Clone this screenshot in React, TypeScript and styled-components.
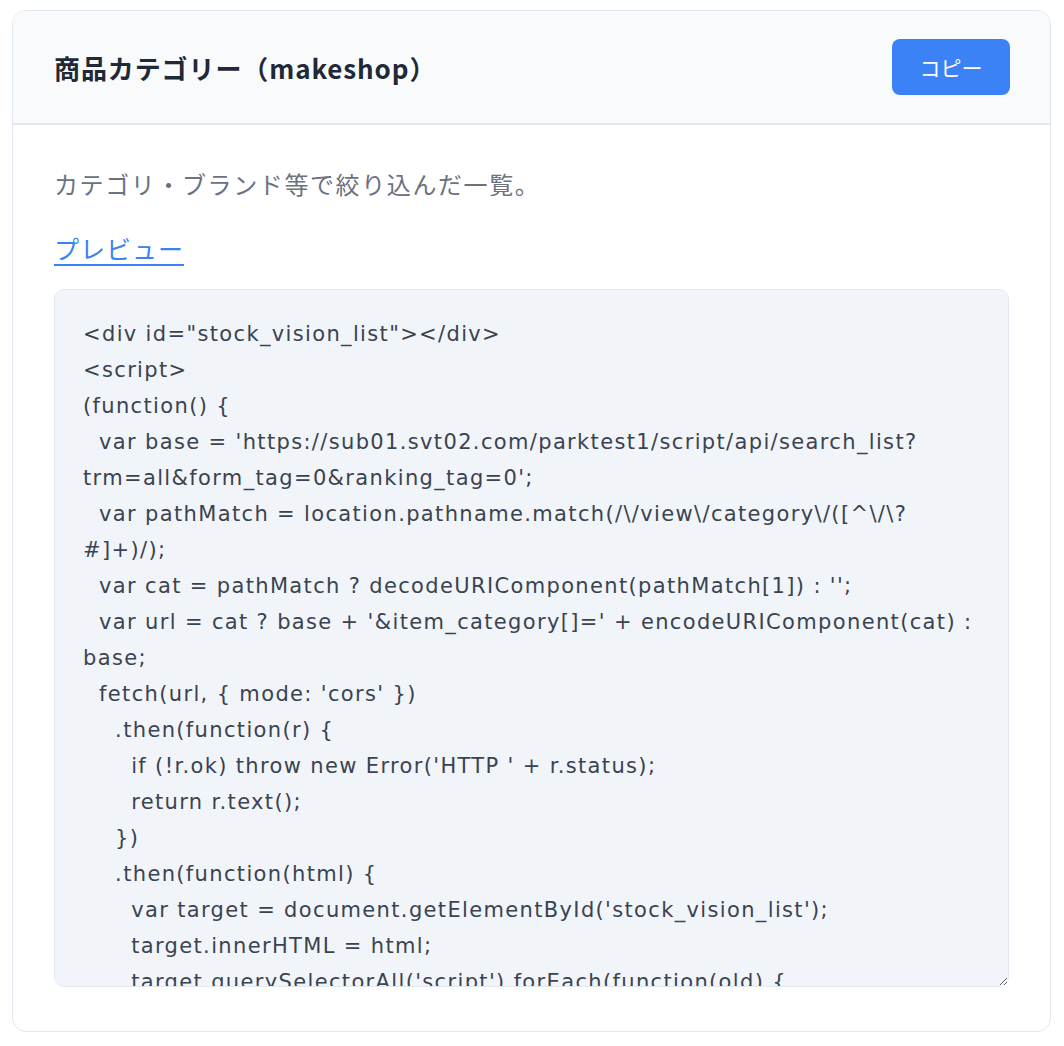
import React from "react";
import styled, { createGlobalStyle } from "styled-components";

const GlobalStyle = createGlobalStyle`
  body {
    margin: 0;
    background: #ffffff;
    font-family: "Noto Sans CJK JP", "Noto Sans", sans-serif;
  }
`;

const Page = styled.div`
  padding: 10px 13px 12px 12px;
`;

const Card = styled.section`
  border: 1.5px solid #e2e8f0;
  border-radius: 14px;
  background: #ffffff;
  overflow: hidden;
`;

const Header = styled.div`
  display: flex;
  align-items: center;
  justify-content: space-between;
  height: 112px;
  padding: 0 40px 0 41px;
  background: #f8fafc;
  border-bottom: 2px solid #e5e7eb;
`;

const Title = styled.h2`
  margin: 0;
  font-size: 26px;
  font-weight: 700;
  color: #1f2937;
  letter-spacing: 0.9px;
`;

const CopyButton = styled.button`
  width: 118px;
  height: 56px;
  border: none;
  border-radius: 8px;
  background: #3b82f6;
  color: #ffffff;
  font-family: "Noto Sans CJK JP", sans-serif;
  font-size: 21px;
  cursor: pointer;
`;

const Body = styled.div`
  padding: 42px 41px 44px 41px;
`;

const Description = styled.p`
  margin: 0 0 30px;
  font-size: 24px;
  letter-spacing: 1.6px;
  line-height: 34px;
  color: #6b7280;
`;

const PreviewLink = styled.a`
  display: inline-block;
  font-size: 25px;
  letter-spacing: 1px;
  line-height: 34px;
  color: #3b82f6;
  text-decoration: underline;
  text-underline-offset: 5px;
  margin-bottom: 24px;
`;

const CodeArea = styled.textarea`
  display: block;
  box-sizing: border-box;
  width: 100%;
  height: 698px;
  margin: 0;
  padding: 26px 28px;
  background: #f1f5f9;
  border: 1.5px solid #e2e8f0;
  border-radius: 10px;
  color: #3b4350;
  font-family: "DejaVu Sans", sans-serif;
  font-size: 21px;
  letter-spacing: 1.35px;
  line-height: 36px;
  resize: vertical;
  scrollbar-width: none;
  outline: none;
`;

const code = `<div id="stock_vision_list"></div>
<script>
(function() {
  var base = 'https://sub01.svt02.com/parktest1/script/api/search_list?trm=all&form_tag=0&ranking_tag=0';
  var pathMatch = location.pathname.match(/\\/view\\/category\\/([^\\/\\?#]+)/);
  var cat = pathMatch ? decodeURIComponent(pathMatch[1]) : '';
  var url = cat ? base + '&item_category[]=' + encodeURIComponent(cat) : base;
  fetch(url, { mode: 'cors' })
    .then(function(r) {
      if (!r.ok) throw new Error('HTTP ' + r.status);
      return r.text();
    })
    .then(function(html) {
      var target = document.getElementById('stock_vision_list');
      target.innerHTML = html;
      target.querySelectorAll('script').forEach(function(old) {
        var s = document.createElement('script');
        s.text = old.text;
        old.parentNode.replaceChild(s, old);
      });
    })
    .catch(function(e) { console.error(e); });
})();
</script>`;

function App() {
  return (
    <Page>
      <GlobalStyle />
      <Card>
        <Header>
          <Title>商品カテゴリー（makeshop）</Title>
          <CopyButton>コピー</CopyButton>
        </Header>
        <Body>
          <Description>カテゴリ・ブランド等で絞り込んだ一覧。</Description>
          <PreviewLink href="#">プレビュー</PreviewLink>
          <CodeArea readOnly value={code} />
        </Body>
      </Card>
    </Page>
  );
}

export default App;
